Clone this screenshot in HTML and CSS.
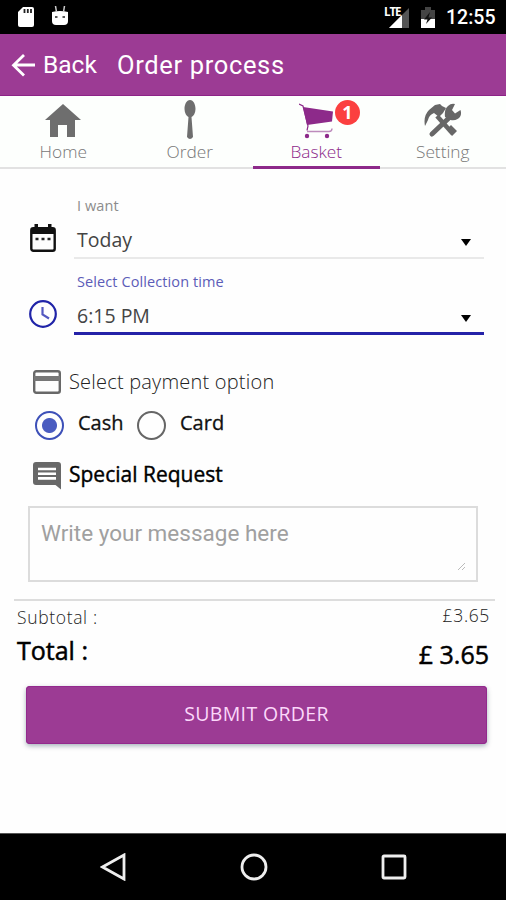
FILE: index.html
```html
<!DOCTYPE html>
<html lang="en">
<head>
<meta charset="utf-8">
<title>Order process</title>
<link rel="stylesheet" href="styles.css">
</head>
<body>
<div class="phone">
  <div class="status">
    <svg class="sd" width="18" height="22" viewBox="0 0 18 22"><path fill="#fff" d="M6 1h9q2 0 2 2v16q0 2-2 2H3q-2 0-2-2V6z"/><path stroke="#222" stroke-width="1.8" d="M7.5 3v4M10.8 3v4M14 3v4"/></svg>
    <svg class="droid" width="18" height="22" viewBox="0 0 18 22"><path fill="#fff" d="M1 6q8-2 16 0v9q0 4-4 4H5q-4 0-4-4z"/><path stroke="#ccc" stroke-width="1.5" d="M4.500 0l1 6M13.500 0l-1 6"/><path stroke="#222" stroke-width="1.600" d="M4 11h2.500M11.500 11H14"/></svg>
    <span class="spacer"></span>
    <span class="lte">LTE</span>
    <svg class="signal" width="20" height="20" viewBox="0 0 20 20"><path fill="#555" d="M20 0v20H0z"/><path fill="#fff" d="M13 7v13H0z"/></svg>
    <svg class="battery" width="14" height="22" viewBox="0 0 14 22"><path fill="#444" d="M0 3h4V0h6v3h4v9H0z"/><path fill="#fff" d="M0 12h14v9H0z"/><path fill="#111" d="M9 5l-6 7.500h3.500L5 17l6-6.500H7.500z"/></svg>
    <span class="time">12:55</span>
  </div>
  <header class="bar">
    <svg width="24" height="24" viewBox="0 0 24 24" fill="none" stroke="#fff" stroke-width="2.800"><path d="M24 12H3M13 2L2.500 12.200 13 22.500"/></svg>
    <span class="back">Back</span>
    <h1 class="title">Order process</h1>
  </header>
  <nav class="tabs">
    <a class="tab">
      <svg width="36" height="36" viewBox="0 0 36 36" fill="#6e6e6e"><path d="M18 1L0 17h5v17h8V22h9v12h8V17h6z"/></svg>
      <span class="home">Home</span>
    </a>
    <a class="tab">
      <svg width="12" height="40" viewBox="0 0 12 40" fill="#6e6e6e"><path d="M6 0C9.500 0 11.500 4.500 11.500 9c0 4-2 7-4 8l1.500 20q-3 4-6 0l1.500-20c-2-1-4-4-4-8C.5 4.500 2.500 0 6 0z"/></svg>
      <span>Order</span>
    </a>
    <a class="tab active">
      <svg class="cart" width="34" height="36" viewBox="0 0 34 36" fill="#8d2a8a"><path d="M4 4l30 4.500-1 10L8 22z"/><path fill="none" stroke="#8d2a8a" stroke-width="1.200" d="M0 1l4 2 5 20-1 4.500"/><path fill="none" stroke="#bd8bbc" stroke-width="1.400" d="M8 28.500h22q3 0 3-3"/><circle cx="8" cy="33" r="2.200"/><circle cx="28" cy="33" r="2.200"/></svg>
      <span>Basket</span>
      <b class="badge">1</b>
    </a>
    <a class="tab">
      <svg width="38" height="36" viewBox="0 0 38 36"><g fill="none" stroke="#676767"><path stroke-width="4.500" d="M13 13l16 18"/><path stroke-width="5" stroke-linecap="round" d="M8 31L26 14"/></g><path fill="#676767" d="M1 23Q-1 13 5 7l6-5 5-1 2 2 4 2-3 5-4 4-5-4q-5 2-6 7zM21 14q-1-8 3-11 3-3 7-2l-3 6 3 3.500 5.500-3.500q2 6-3 9-3 2-7 1zM24 25l3-3 6 6-5 5z"/></svg>
      <span>Setting</span>
    </a>
  </nav>
  <main>
    <section class="field">
      <svg class="ficon" width="26" height="30" viewBox="0 0 26 30"><rect x="1.300" y="5.300" width="23.400" height="22.400" rx="2" fill="none" stroke="#111" stroke-width="2.400"/><path fill="#111" d="M1 5h24v6H1zM4.500 1H8v5H4.500zM18 1h3.500v5H18z"/><path stroke="#222" stroke-width="2.600" d="M5.500 16h3M11.500 16h3M17.500 16h3"/></svg>
      <div class="select">
        <label class="lab want">I want</label>
        <div class="val"><span class="today">Today</span><i class="caret"></i></div>
      </div>
    </section>
    <section class="field focus">
      <svg class="ficon" width="30" height="30" viewBox="0 0 30 30" fill="none" stroke="#2024a8" stroke-width="2.200"><circle cx="15" cy="15" r="12.800"/><path stroke="#5358c0" d="M14.500 8v7.500l6.500 4"/></svg>
      <div class="select">
        <label class="lab">Select Collection time</label>
        <div class="val"><span>6:15 PM</span><i class="caret"></i></div>
      </div>
    </section>
    <section class="heading pay">
      <svg width="28" height="24" viewBox="0 0 28 24"><rect x="1.200" y="1.200" width="25.600" height="21.600" rx="2" fill="none" stroke="#686868" stroke-width="2.400"/><path fill="#777" d="M1 6h26v5H1z"/></svg>
      <span>Select payment option</span>
    </section>
    <section class="radios">
      <i class="radio on"></i><span class="opt cash">Cash</span>
      <i class="radio"></i><span class="opt card">Card</span>
    </section>
    <section class="heading req">
      <svg width="28" height="28" viewBox="0 0 28 28"><path fill="#686868" d="M3 0h22q3 0 3 3v24.500L22.500 23H3q-3 0-3-3V3q0-3 3-3z"/><path stroke="#fff" stroke-width="2.600" d="M5 7h18M5 11.700h18M5 16.400h18"/></svg>
      <span>Special Request</span>
    </section>
    <div class="message"><span>Write your message here</span><svg width="7" height="7" viewBox="0 0 7 7" stroke="#aaa" stroke-width=".8"><path d="M0 7L7 0M4 7l3-3"/></svg></div>
    <div class="totals">
      <div class="row sub"><span>Subtotal :</span><span class="amount">£3.65</span></div>
      <div class="row total"><span>Total :</span><span class="amount">£ 3.65</span></div>
    </div>
    <div class="submit">SUBMIT ORDER</div>
  </main>
  <footer class="nav">
    <svg width="26" height="28" viewBox="0 0 26 28"><path d="M24 2v24L2.500 14z"/></svg>
    <svg width="28" height="28" viewBox="0 0 28 28"><circle cx="14" cy="14" r="12"/></svg>
    <svg width="26" height="28" viewBox="0 0 26 28"><rect x="2" y="3" width="22" height="22" rx="1"/></svg>
  </footer>
</div>
</body>
</html>
```
FILE: styles.css
```css
* { box-sizing: border-box; }
body { margin: 0; background: #fefefe; font-family: "Open Sans", sans-serif; color: #111; }
svg { display: block; flex: none; }
.phone { width: 506px; height: 900px; display: flex; flex-direction: column; overflow: hidden; white-space: nowrap; }

.status { height: 34px; background: #000; display: flex; align-items: flex-start; padding: 6px 11px 0 17px; color: #fff; font-family: Roboto, sans-serif; }
.droid { margin-left: 16px; }
.spacer { flex: 1; }
.lte { font: 700 11.5px/12px "Open Sans", sans-serif; letter-spacing: -1.100px; width: 5px; position: relative; z-index: 1; }
.signal { margin: 2px 12px 0 0; }
.battery { margin: 1px 11px 0 0; }
.time { font-size: 19.5px; font-weight: 500; line-height: 24px; width: 49px; }

.bar { height: 62px; background: #9c3b94; border-bottom: 1px solid #8d2387; display: flex; align-items: center; padding: 0 0 0 11px; color: #fff; font-family: Roboto, sans-serif; font-size: 24.5px; }
.back { margin-left: 8px; width: 74px; }
.title { margin: 0; font-size: 25.5px; font-weight: 400; letter-spacing: .65px; }

.tabs { height: 73px; display: flex; background: #fdfffd; }
.tab { width: 126.5px; display: flex; flex-direction: column; align-items: center; justify-content: space-between; padding-top: 7px; position: relative; border-bottom: 2px solid #e2e2e2; color: #777; font-weight: 300; font-size: 17.3px; }
.tab:nth-child(2) { padding-top: 4px; }
.tab span { line-height: 24px; margin-bottom: 3px; }
.tab.active { border-bottom: 3px solid #8d2a8a; color: #8d2a8a; }
.tab.active span { margin-bottom: 2px; }
.badge { position: absolute; left: 82px; top: 4px; width: 25px; height: 25px; border-radius: 50%; background: #fb4040; color: #fff; font-size: 18px; font-weight: 700; line-height: 25px; text-align: center; }

main { height: 664px; }
.field { height: 76px; margin: 0 22px 0 28px; display: flex; align-items: flex-start; }
.field:first-child { margin-top: 14px; }
.ficon { width: 30px; margin-top: 40px; }
.select { flex: 1; margin-left: 16px; height: 76px; padding: 11px 0 0 3px; border-bottom: 2px solid #e9e9e9; }
.focus .select { border-bottom: 3px solid #2522a8; }
.lab { display: block; font-size: 14.5px; line-height: 24px; letter-spacing: .1px; color: #5c5cb8; }
.lab.want { color: #8c8c8c; }
.val { display: flex; justify-content: space-between; align-items: center; font-size: 19.5px; line-height: 43px; color: #444; }
.caret { border: 5.500px solid transparent; border-top: 7px solid #000; border-bottom: 0; margin: 5px 13px 0 0; }

.heading { display: flex; align-items: center; margin-left: 33px; gap: 8px; font-size: 20px; height: 30px; }
.pay { margin-top: 32px; color: #222; font-weight: 300; letter-spacing: .2px; }
.pay span { margin-top: -2px; }
.req { margin-top: 19px; font-size: 21px; color: #000; -webkit-text-stroke: .4px #000; }
.req svg { -webkit-text-stroke: 0; margin-top: 2px; }
.req span { margin-top: -2px; }
.radios { display: flex; align-items: center; height: 34px; margin: 11px 0 -1px 35px; font-size: 20px; -webkit-text-stroke: .3px #111; }
.radio { width: 29px; height: 29px; border: 2.500px solid #666; border-radius: 50%; }
.radio.on { border-color: #3d50b8; background: radial-gradient(circle, #4a5cc0 7px, transparent 8px); }
.opt { margin-left: 14px; line-height: 30px; padding-bottom: 4px; }
.cash { width: 59px; }
.message { width: 450px; height: 76px; margin: 16px 0 0 28px; border: 2px solid #dcdcdc; padding: 10px 11px; display: flex; justify-content: space-between; align-items: flex-end; font: 22.5px/31px Roboto, sans-serif; color: #a0a0a0; }
.message span { align-self: flex-start; }
.totals { margin: 17px 11px 0 14px; border-top: 2px solid #ddd; height: 77px; padding: 0 6px 0 3px; }
.row { display: flex; justify-content: space-between; }
.sub { font-size: 17.5px; font-weight: 300; letter-spacing: .65px; line-height: 33px; height: 33px; color: #222; }
.sub .amount { margin-top: -2px; margin-right: -1px; }
.total { font-size: 25px; line-height: 32px; color: #000; -webkit-text-stroke: .5px #000; }
.total .amount { margin-top: 4px; }
.submit { width: 461px; height: 58px; margin: 10px 0 0 26px; border-radius: 4px; background: #9c3b94; box-shadow: inset 0 0 0 1px #93298d, 0 2px 5px rgba(0,40,60,.35); color: #fbd8fa; text-align: center; font-size: 19.5px; letter-spacing: .35px; line-height: 56px; }

.nav { height: 67px; flex: none; background: #000; border-top: 1px solid #555; display: flex; justify-content: space-between; align-items: center; padding: 0 99px 0 100px; }
.nav svg { fill: none; stroke: #eee; stroke-width: 2.800; }
```
